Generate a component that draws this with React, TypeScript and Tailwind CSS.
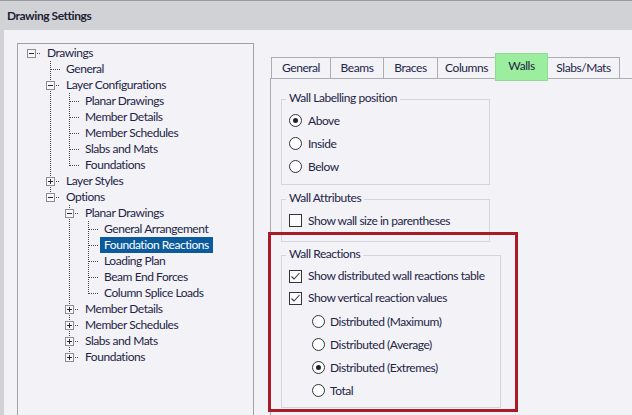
import React from "react";

type Row = {
  label: string;
  level: number;
  last: boolean;
  kind: "leaf" | "open" | "closed";
  guides: boolean[];
  selected?: boolean;
  root?: boolean;
};

const rows: Row[] = [
  { label: "Drawings", level: 0, last: true, kind: "open", guides: [], root: true },
  { label: "General", level: 1, last: false, kind: "leaf", guides: [false] },
  { label: "Layer Configurations", level: 1, last: false, kind: "open", guides: [false] },
  { label: "Planar Drawings", level: 2, last: false, kind: "leaf", guides: [false, true] },
  { label: "Member Details", level: 2, last: false, kind: "leaf", guides: [false, true] },
  { label: "Member Schedules", level: 2, last: false, kind: "leaf", guides: [false, true] },
  { label: "Slabs and Mats", level: 2, last: false, kind: "leaf", guides: [false, true] },
  { label: "Foundations", level: 2, last: true, kind: "leaf", guides: [false, true] },
  { label: "Layer Styles", level: 1, last: false, kind: "closed", guides: [false] },
  { label: "Options", level: 1, last: true, kind: "open", guides: [false] },
  { label: "Planar Drawings", level: 2, last: false, kind: "open", guides: [false, false] },
  { label: "General Arrangement", level: 3, last: false, kind: "leaf", guides: [false, false, true] },
  { label: "Foundation Reactions", level: 3, last: false, kind: "leaf", guides: [false, false, true], selected: true },
  { label: "Loading Plan", level: 3, last: false, kind: "leaf", guides: [false, false, true] },
  { label: "Beam End Forces", level: 3, last: false, kind: "leaf", guides: [false, false, true] },
  { label: "Column Splice Loads", level: 3, last: true, kind: "leaf", guides: [false, false, true] },
  { label: "Member Details", level: 2, last: false, kind: "closed", guides: [false, false] },
  { label: "Member Schedules", level: 2, last: false, kind: "closed", guides: [false, false] },
  { label: "Slabs and Mats", level: 2, last: false, kind: "closed", guides: [false, false] },
  { label: "Foundations", level: 2, last: true, kind: "closed", guides: [false, false] },
];

const LINE = "#4a4a4e";

function GuideCell({ show }: { show: boolean }) {
  return (
    <svg width="19" height="16" className="shrink-0" shapeRendering="crispEdges">
      {show && <line x1="9.5" y1="0" x2="9.5" y2="16" stroke={LINE} strokeDasharray="1 1" />}
    </svg>
  );
}

function OwnCell({ row }: { row: Row }) {
  const hasBox = row.kind !== "leaf";
  return (
    <svg width="19" height="16" className="shrink-0" shapeRendering="crispEdges">
      {!row.root && <line x1="9.5" y1="0" x2="9.5" y2={row.last ? 9 : 16} stroke={LINE} strokeDasharray="1 1" />}
      <line x1={hasBox ? 15 : 10} y1="8.5" x2="19" y2="8.5" stroke={LINE} strokeDasharray="1 1" />
      {hasBox && (
        <>
          <rect x="5.5" y="4.5" width="8" height="8" fill="#f7f7f9" stroke="#8e8e92" />
          <line x1="7" y1="8.5" x2="12" y2="8.5" stroke="#2a2a2a" />
          {row.kind === "closed" && <line x1="9.5" y1="6" x2="9.5" y2="11" stroke="#2a2a2a" />}
        </>
      )}
    </svg>
  );
}

function Tree() {
  return (
    <div className="w-[237px] h-[400px] border border-[#a2a2a6] pt-[1px] pl-[4px] shrink-0">
      {rows.map((r, i) => (
        <div key={i} className="flex items-center h-[16px]">
          {r.guides.map((g, j) => (
            <GuideCell key={j} show={g} />
          ))}
          <OwnCell row={r} />
          <span
            className={
              "ml-[2px] px-[4px] h-[16px] leading-[16px] whitespace-nowrap " +
              (r.selected ? "bg-[#0b5b9c] text-white" : "")
            }
          >
            {r.label}
          </span>
        </div>
      ))}
    </div>
  );
}

function Radio({ checked }: { checked?: boolean }) {
  return (
    <span className="w-[13px] h-[13px] rounded-full border border-[#333338] bg-white flex items-center justify-center shrink-0">
      {checked && <span className="w-[5px] h-[5px] rounded-full bg-[#222226]" />}
    </span>
  );
}

function Check({ checked }: { checked?: boolean }) {
  return (
    <span className="w-[13px] h-[13px] border border-[#333338] bg-[#fbfbfc] flex items-center justify-center shrink-0">
      {checked && (
        <svg width="11" height="11" viewBox="0 0 11 11">
          <polyline points="1.5,5.5 4,8 9.5,2" fill="none" stroke="#3a3a3e" strokeWidth="1.1" />
        </svg>
      )}
    </span>
  );
}

function Group({ title, className, children }: { title: string; className: string; children: React.ReactNode }) {
  return (
    <div className={"relative border border-[#d6d6da] " + className}>
      <span className="absolute left-[4px] -top-[10px] px-[3px] h-[16px] leading-[16px] bg-[#f2f2f7] whitespace-nowrap">
        {title}
      </span>
      {children}
    </div>
  );
}

const tabs = [
  { label: "General", w: "w-[60px]" },
  { label: "Beams", w: "w-[54px]" },
  { label: "Braces", w: "w-[55px]" },
  { label: "Columns", w: "w-[59px]" },
  { label: "Walls", w: "w-[53px]", selected: true },
  { label: "Slabs/Mats", w: "w-[73px]" },
];

export default function App() {
  return (
    <div
      className="w-[632px] h-[415px] overflow-hidden bg-[#d1d2d6] border-t border-[#9a9ca2] flex flex-col text-[12px] tracking-[-0.45px] text-[#1f2545]"
      style={{ fontFamily: 'Lato, "Noto Sans", sans-serif' }}
    >
      <div className="h-[29px] shrink-0 flex items-center pl-[7px] font-bold text-[#1d2233]">Drawing Settings</div>
      <div className="flex-1 ml-[4px] bg-[#f2f2f7] flex items-start pl-[13px] pt-[13px]">
        <Tree />
        <div className="ml-[16px] mt-[10px] shrink-0">
          <div className="flex items-end h-[25px] pl-[1px]">
            {tabs.map((t, i) =>
              t.selected ? (
                <div
                  key={i}
                  className={
                    t.w +
                    " -ml-px h-[28px] -mb-[3px] relative z-10 bg-[#9aee9e] border border-[#8fdc94] flex items-center justify-center pb-[3px]"
                  }
                >
                  {t.label}
                </div>
              ) : (
                <div
                  key={i}
                  className={
                    t.w +
                    (i > 0 ? " -ml-px" : "") +
                    " h-[21px] border-t border-l border-r border-[#adadb1] flex items-center justify-center"
                  }
                >
                  {t.label}
                </div>
              )
            )}
          </div>
          <div className="relative w-[400px] h-[360px] border-l border-t border-[#adadb1] pl-[10px] pt-[20px]">
            <Group title="Wall Labelling position" className="w-[209px] h-[86px] pt-[9px] pl-[7px]">
              {["Above", "Inside", "Below"].map((l, i) => (
                <div key={l} className="flex items-center h-[23px] gap-[6px]">
                  <Radio checked={i === 0} />
                  <span>{l}</span>
                </div>
              ))}
            </Group>
            <Group title="Wall Attributes" className="mt-[14px] w-[209px] h-[43px] pt-[9px] pl-[7px]">
              <div className="flex items-center h-[23px] gap-[6px]">
                <Check />
                <span>Show wall size in parentheses</span>
              </div>
            </Group>
            <Group title="Wall Reactions" className="mt-[13px] w-[220px] h-[153px] pt-[9px] pl-[7px]">
              <div className="flex items-center h-[22px] gap-[6px]">
                <Check checked />
                <span className="whitespace-nowrap">Show distributed wall reactions table</span>
              </div>
              <div className="flex items-center h-[22px] gap-[6px]">
                <Check checked />
                <span className="whitespace-nowrap">Show vertical reaction values</span>
              </div>
              <div className="pl-[23px] pt-[1px]">
                {["Distributed (Maximum)", "Distributed (Average)", "Distributed (Extremes)", "Total"].map((l, i) => (
                  <div key={l} className="flex items-center h-[23px] gap-[5px]">
                    <Radio checked={i === 2} />
                    <span className="whitespace-nowrap">{l}</span>
                  </div>
                ))}
              </div>
            </Group>
            <div className="absolute left-[-3px] top-[153px] w-[250px] h-[180px] border-[3px] border-[#a81c27] pointer-events-none" />
          </div>
        </div>
      </div>
    </div>
  );
}
